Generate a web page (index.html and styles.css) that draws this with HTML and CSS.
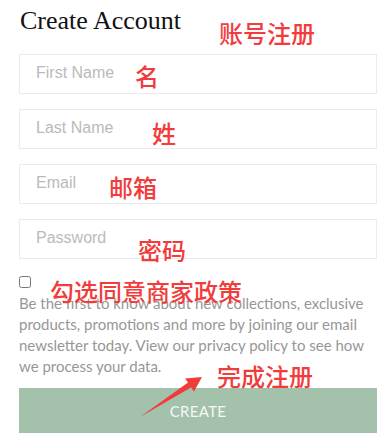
FILE: index.html
```html
<!DOCTYPE html>
<html lang="en">
<head>
<meta charset="utf-8">
<title>Create Account</title>
<link rel="stylesheet" href="styles.css">
</head>
<body>
<div class="page">
  <h1 class="title">Create Account</h1>
  <form class="form">
    <div class="fields">
      <input class="field" type="text" placeholder="First Name">
      <input class="field" type="text" placeholder="Last Name">
      <input class="field" type="email" placeholder="Email">
      <input class="field" type="password" placeholder="Password">
    </div>
    <input class="check" type="checkbox">
    <p class="note">Be the first to know about new collections, exclusive products, promotions and more by joining our email newsletter today. View our privacy policy to see how we process your data.</p>
    <button class="create" type="button">CREATE</button>
  </form>

  <span class="ann ann-account">账号注册</span>
  <span class="ann ann-first">名</span>
  <span class="ann ann-last">姓</span>
  <span class="ann ann-email">邮箱</span>
  <span class="ann ann-pass">密码</span>
  <span class="ann ann-agree">勾选同意商家政策</span>
  <span class="ann ann-done">完成注册</span>
  <svg class="arrow" width="378" height="438" viewBox="0 0 378 438">
    <polygon points="140,417 188,382.5 185,378.5 202,377 194,391.5 191,387.5" fill="#f23b3b"/>
  </svg>
</div>
</body>
</html>
```
FILE: styles.css
```css
html, body {
  margin: 0;
  padding: 0;
  background: #fff;
}
.page {
  position: relative;
  width: 378px;
  height: 438px;
  box-sizing: border-box;
  padding: 6px 1px 0 19px;
  overflow: hidden;
}
.title {
  margin: 0 0 18px 0;
  font-family: "Liberation Serif", serif;
  font-weight: normal;
  font-size: 26px;
  line-height: 30px;
  color: #111;
  padding-left: 1px;
}
.form {
  display: flex;
  flex-direction: column;
  align-items: flex-start;
}
.fields {
  display: flex;
  flex-direction: column;
  gap: 15px;
  width: 100%;
}
.field {
  box-sizing: border-box;
  width: 100%;
  height: 40px;
  margin: 0;
  border: 1px solid #ebebeb;
  padding: 0 0 2px 16px;
  font-family: "Liberation Sans", Arial, sans-serif;
  font-size: 16px;
  color: #333;
  background: #fff;
  outline: none;
}
.field::placeholder {
  color: #bababa;
}
.check {
  margin: 17px 0 0 0;
  width: 12px;
  height: 12px;
}
.note {
  margin: 5px 0 0 0;
  font-family: Lato, "Noto Sans", sans-serif;
  font-size: 15px;
  line-height: 21px;
  color: #979797;
}
.create {
  margin-top: 11px;
  width: 100%;
  height: 45px;
  border: 0;
  background: #a3c1ab;
  color: #f6f8f6;
  font-family: Lato, "Noto Sans", sans-serif;
  font-size: 15px;
  letter-spacing: 0.3px;
  padding: 0;
}
.ann {
  position: absolute;
  font-family: "Noto Sans CJK SC", sans-serif;
  font-size: 24px;
  font-weight: 500;
  line-height: 24px;
  color: #f23b3b;
  white-space: nowrap;
}
.ann-account { left: 219px; top: 21px; }
.ann-first { left: 135px; top: 64px; }
.ann-last { left: 152px; top: 121px; }
.ann-email { left: 109px; top: 175px; }
.ann-pass { left: 138px; top: 238px; }
.ann-agree { left: 50px; top: 279px; }
.ann-done { left: 217px; top: 364px; }
.arrow {
  position: absolute;
  left: 0;
  top: 0;
  pointer-events: none;
}
```
